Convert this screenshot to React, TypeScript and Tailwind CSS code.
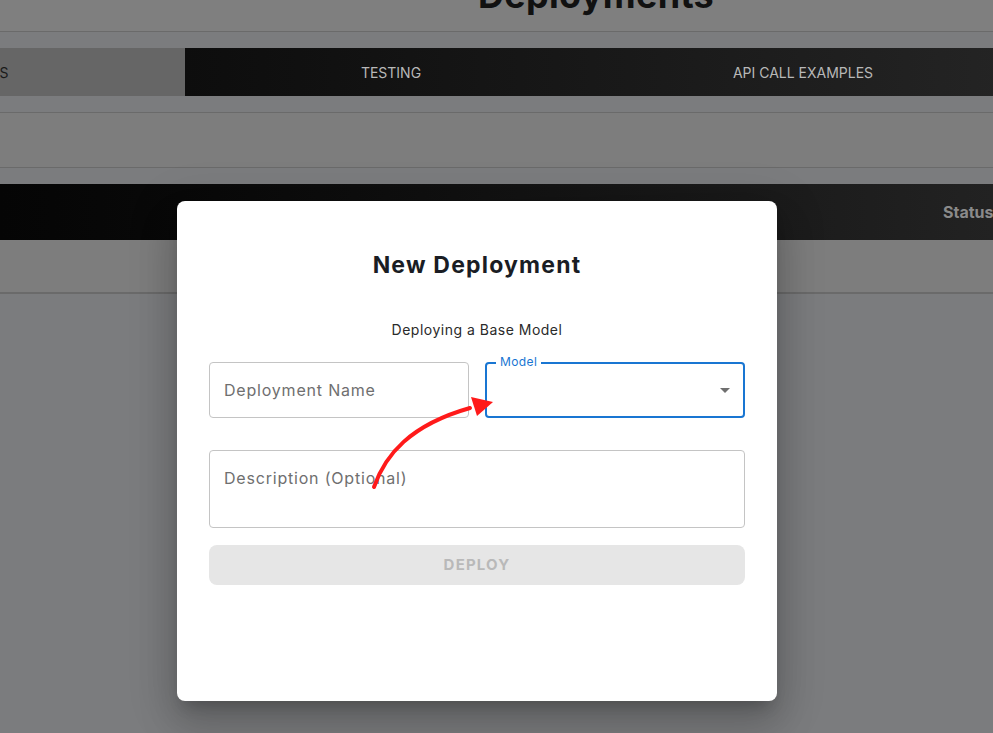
export default function App() {
  return (
    <div className="relative w-[993px] h-[733px] overflow-hidden bg-[#7b7c7e] font-['Inter',sans-serif]">
      {/* page behind the overlay */}
      <div className="h-[32px] bg-[#7f7f7f] border-b border-[#6a6a6a] relative">
        <h1 className="absolute left-[478px] top-[-27px] text-[36px] font-bold text-[#111] leading-[44px] tracking-[0.3px]">Deployments</h1>
      </div>
      <div className="h-[16px]" />
      <div className="flex h-[48px] ml-[-227px] w-[1236px] text-[14px] text-[#b8b8b8]">
        <div className="w-[412px] bg-[#666666] flex items-center justify-center text-[#1a1a1a]">MODELS</div>
        <div className="w-[824px] flex bg-gradient-to-r from-[#0d0d0d] to-[#242424]">
          <div className="w-[412px] flex items-center justify-center">TESTING</div>
          <div className="w-[412px] flex items-center justify-center">API CALL EXAMPLES</div>
        </div>
      </div>
      <div className="h-[16px]" />
      <div className="h-[56px] border-y border-[#6a6a6a] bg-[#7d7d7d]" />
      <div className="h-[16px]" />
      <div className="h-[56px] bg-gradient-to-r from-[#050505] to-[#222222] flex items-center justify-end">
        <span className="text-[16px] font-bold text-[#8a8a8a] mr-[-10px] w-[60px]">Status</span>
      </div>
      <div className="h-[54px] border-b-2 border-[#6a6a6a] bg-[#7d7d7d]" />

      {/* modal */}
      <div className="absolute inset-0 pl-[177px] pt-[201px]">
        <div className="w-[600px] h-[500px] bg-white rounded-[8px] shadow-[0_11px_15px_-7px_rgba(0,0,0,0.2),0_24px_38px_3px_rgba(0,0,0,0.14),0_9px_46px_8px_rgba(0,0,0,0.12)] px-[32px] pt-[48px] flex flex-col">
          <h2 className="text-center text-[23px] font-bold text-[#1a1d24] leading-[32px] tracking-[1.2px]">New Deployment</h2>
          <p className="text-center text-[14px] text-[#2a2a2a] mt-[39px] leading-[20px] tracking-[0.5px]">Deploying a Base Model</p>
          <div className="flex gap-[16px] mt-[22px]">
            <div className="w-[260px] h-[56px] border border-[#c4c4c4] rounded-[4px] flex items-center px-[14px] text-[16px] text-[#6f6f6f] tracking-[0.8px]">
              Deployment Name
            </div>
            <div className="relative w-[260px] h-[56px] border-2 border-[#1976d2] rounded-[4px] flex items-center justify-end pr-[13px]">
              <span className="absolute left-[9px] top-[-9px] bg-white px-[4px] text-[12px] leading-[14px] text-[#1976d2] tracking-[0.4px]">Model</span>
              <svg width="10" height="5" viewBox="0 0 10 5"><path d="M0 0 L10 0 L5 5 Z" fill="#6f6f6f" /></svg>
            </div>
          </div>
          <div className="mt-[32px] h-[78px] border border-[#c4c4c4] rounded-[4px] px-[14px] pt-[16px] text-[16px] text-[#6f6f6f] leading-[22px] tracking-[0.8px]">
            Description (Optional)
          </div>
          <div className="mt-[17px] h-[40px] rounded-[8px] bg-[#e6e6e6] flex items-center justify-center text-[15px] font-bold text-[#b9b9b9] tracking-[1.2px]">
            DEPLOY
          </div>
        </div>
      </div>

      {/* annotation arrow */}
      <svg className="absolute inset-0 pointer-events-none" width="993" height="733">
        <path d="M374 487 C 385 455, 410 425, 470 408" stroke="#ff1a1a" strokeWidth="4" fill="none" strokeLinecap="round" />
        <polygon points="493,402 471,397 477,416" fill="#ff1a1a" />
      </svg>
    </div>
  )
}
